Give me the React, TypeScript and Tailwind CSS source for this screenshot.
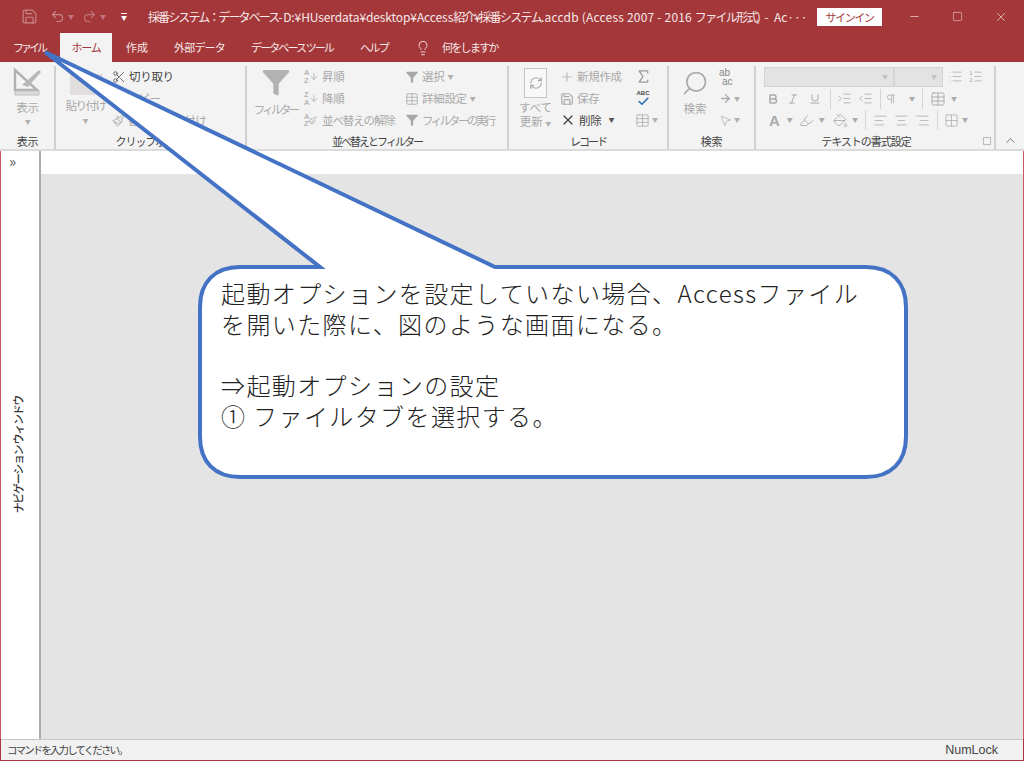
import React from "react";
import {
  Save, Undo2, Redo2, Scissors, Lightbulb, Minus, Square, X, Search, ArrowRight, MousePointer2,
  Bold, Italic, Underline, List, ListOrdered, AlignLeft, AlignCenter, AlignRight, IndentIncrease,
  IndentDecrease, Check, Table, Grid2x2, Sigma, X as Cross, ChevronUp, RefreshCw, Filter, Pilcrow,
  Paintbrush, PaintBucket, Highlighter, Plus, ArrowDown,
} from "lucide-react";

const FONT = "font-['Noto_Sans_CJK_JP','Noto_Sans',sans-serif]";
const GRAY = "text-[#a9a9a9]";

function Caret({ className = "text-[#b0b0b0]" }: { className?: string }) {
  return <span className={`inline-block text-[6px] leading-none ${className}`}>▼</span>;
}

// ribbon group: content on top, caption at the bottom, divider on the right
function Group({ width, label, labelClass, children }: { width: number; label: string; labelClass: string; children: React.ReactNode }) {
  return (
    <div className="relative flex flex-col h-full border-r-2 border-[#d0d0d0] shrink-0 mb-[2px]" style={{ width }}>
      <div className="flex-1 flex min-h-0">{children}</div>
      <div className={`h-[18px] text-center text-[11px] leading-[20px] text-[#444] whitespace-nowrap ${labelClass}`}>{label}</div>
    </div>
  );
}

function Row({ icon, text, dark, caret, track = "tracking-[-0.3px]" }: { icon: React.ReactNode; text: string; dark?: boolean; caret?: boolean; track?: string }) {
  return (
    <div className={`h-[22px] flex items-center gap-[3px] text-[11.5px] whitespace-nowrap ${track} ${dark ? "text-[#444]" : GRAY}`}>
      {icon}
      <span>{text}</span>
      {caret && <Caret className={dark ? "text-[#555] ml-1" : "text-[#b0b0b0]"} />}
    </div>
  );
}

function AzIcon({ top, bottom, pen }: { top: string; bottom: string; pen?: boolean }) {
  return (
    <span className="flex items-center w-[15px] shrink-0">
      <span className="flex flex-col text-[7.5px] leading-[7.5px] font-bold text-[#b5b5b5] font-['Liberation_Sans',sans-serif]">
        <span>{top}</span>
        <span>{bottom}</span>
      </span>
      {pen ? <Paintbrush size={9} className="text-[#b0b0b0]" /> : <ArrowDown size={11} strokeWidth={1.5} className="text-[#999]" />}
    </span>
  );
}

function TitleBar() {
  return (
    <div className="h-[33px] flex items-center text-white shrink-0">
      <div className="w-[148px] flex items-center shrink-0">
        <Save size={17} strokeWidth={1.6} className="ml-[21px] text-[#c98689]" />
        <Undo2 size={15} strokeWidth={1.8} className="ml-[12px] text-[#c98689]" />
        <Caret className="text-[#c0787b] ml-[3px]" />
        <Redo2 size={15} strokeWidth={1.8} className="ml-[8px] text-[#c0787b]" />
        <Caret className="text-[#c0787b] ml-[3px]" />
        <span className="ml-[15px] flex flex-col items-center gap-[1px]">
          <span className="w-[6px] h-[1px] bg-white" />
          <Caret className="text-white" />
        </span>
      </div>
      <div className="w-[669px] text-[12px] whitespace-pre text-[#f6e9e9]">
        <span className="tracking-[-1.9px]">採番システム：データベース-</span>
        <span className="tracking-[-0.1px]"> D:¥HUserdata¥desktop¥Access</span>
        <span className="tracking-[-1.6px]">紹介¥採番システム</span>
        <span className="tracking-[0.2px]">.accdb (Access 2007 - 2016 </span>
        <span className="tracking-[-1.7px]">ファイル形式)</span>
        <span>{"  -  Ac···"}</span>
      </div>
      <div className="w-[65px] h-[18px] bg-white text-[#a4373a] text-[11px] tracking-[-1.4px] leading-[18px] text-center shrink-0">サインイン</div>
      <div className="flex-1 flex items-center justify-end pr-[16px] gap-[31px] text-[#f3e3e3]">
        <Minus size={13} strokeWidth={1.2} />
        <Square size={11} strokeWidth={1.2} />
        <X size={14} strokeWidth={1.2} />
      </div>
    </div>
  );
}

function TabStrip() {
  return (
    <div className="h-[29px] flex items-stretch shrink-0 text-[11px] leading-[29px] whitespace-pre text-[#f6e9e9]">
      <div className="w-[60px] pl-[13px] tracking-[-3px]">ファイル</div>
      <div className="w-[52px] bg-[#f3f3f3] text-[#a4373a] text-center tracking-[-1.3px]">ホーム</div>
      <div className="w-[50px] text-center">作成</div>
      <div className="w-[75px] text-center tracking-[-0.8px]">外部データ</div>
      <div className="w-[110px] text-center tracking-[-1.9px]">データベース ツール</div>
      <div className="w-[54px] text-center tracking-[-1.7px]">ヘルプ</div>
      <div className="flex items-center">
        <Lightbulb size={16} strokeWidth={1.3} className="ml-[14px]" />
        <span className="ml-[11px] tracking-[-1.7px]">何をしますか</span>
      </div>
    </div>
  );
}

function Ribbon() {
  return (
    <div className="h-[89px] bg-[#f3f3f3] border-b-2 border-[#dcdcdc] flex pt-[4px] pl-[1px] shrink-0 text-[11.5px] relative">
      <Group width={55} label="表示" labelClass="tracking-[-0.3px]">
        <div className={`w-full flex flex-col items-center ${GRAY} tracking-[-0.3px]`}>
          <svg width="30" height="30" viewBox="0 0 30 30" className="mt-[1px]" fill="none">
            <path d="M2 3v20h22z" stroke="#b0b0b0" strokeWidth="2.4" />
            <path d="M9 18 26 3l2 2-13 15z" fill="#b8b8b8" />
            <path d="M2 24h24v4H2z" fill="#dcdcdc" stroke="#c0c0c0" />
          </svg>
          <span className="mt-[3px] leading-[15px]">表示</span>
          <Caret className="mt-[4px] text-[#b0b0b0]" />
        </div>
      </Group>
      <Group width={191} label="クリップボード" labelClass="tracking-[-1px]">
        <div className={`w-[56px] flex flex-col items-center pt-[8px] pl-[3px] ${GRAY}`}>
          <div className="w-[32px] h-[21px] bg-[#e2dede] border-r border-[#ccc]" />
          <span className="mt-[3px] tracking-[-1.6px] whitespace-nowrap leading-[15px]">貼り付け</span>
          <Caret className="mt-[5px] text-[#b0b0b0]" />
        </div>
        <div className="flex flex-col">
          <Row dark text="切り取り" icon={<Scissors size={14} strokeWidth={1.5} className="text-[#555]" />} />
          <Row text="コピー" icon={<Square size={12} className="text-[#bbb]" />} />
          <Row text="書式の貼り付け" icon={<Paintbrush size={13} className="text-[#bbb]" />} />
        </div>
      </Group>
      <Group width={262} label="並べ替えとフィルター" labelClass="tracking-[-2px]">
        <div className={`w-[57px] flex flex-col items-center ${GRAY} tracking-[-2.8px]`}>
          <Filter size={32} strokeWidth={0} fill="#b2b2b2" />
          <span className="mt-[4px] leading-[15px] whitespace-nowrap">フィルター</span>
        </div>
        <div className="w-[101px] flex flex-col">
          <Row text="昇順" icon={<AzIcon top="A" bottom="Z" />} />
          <Row text="降順" icon={<AzIcon top="Z" bottom="A" />} />
          <Row text="並べ替えの解除" track="tracking-[-1.1px]" icon={<AzIcon top="A" bottom="Z" pen />} />
        </div>
        <div className="flex flex-col">
          <Row caret text="選択" icon={<Filter size={14} strokeWidth={0} fill="#a8a8a8" />} />
          <Row caret text="詳細設定" icon={<Table size={14} strokeWidth={1.4} className="text-[#aaa]" />} />
          <Row text="フィルターの実行" track="tracking-[-2.5px]" icon={<Filter size={14} strokeWidth={0} fill="#a8a8a8" />} />
        </div>
      </Group>
      <Group width={160} label="レコード" labelClass="tracking-[-2px]">
        <div className={`w-[51px] flex flex-col items-center ${GRAY} pt-[2px] pl-[2px]`}>
          <div className="w-[23px] h-[30px] border border-[#c4c4c4] bg-[#f8f8f8] flex items-center justify-center">
            <RefreshCw size={14} strokeWidth={2} className="text-[#aaa]" />
          </div>
          <span className="mt-[2px] leading-[14px]">すべて</span>
          <span className="leading-[14px] whitespace-nowrap">更新 <Caret /></span>
        </div>
        <div className="w-[73px] flex flex-col">
          <Row text="新規作成" icon={<Plus size={14} className="text-[#bbb]" />} />
          <Row text="保存" icon={<Save size={14} className="text-[#aaa]" />} />
          <Row dark caret text="削除" icon={<Cross size={16} strokeWidth={1.8} className="text-[#444]" />} />
        </div>
        <div className="flex flex-col pl-[2px]">
          <div className="h-[22px] flex items-center"><Sigma size={17} strokeWidth={1.8} className="text-[#999]" /></div>
          <div className="h-[22px] flex flex-col items-center justify-center w-[16px]">
            <span className="text-[6px] leading-[6px] font-bold text-[#444] font-['Liberation_Sans',sans-serif]">ABC</span>
            <Check size={13} strokeWidth={3} className="text-[#2b6cb8] -mt-[1px]" />
          </div>
          <div className="h-[22px] flex items-center gap-[2px]"><Table size={15} strokeWidth={1.3} className="text-[#aaa]" /><Caret /></div>
        </div>
      </Group>
      <Group width={87} label="検索" labelClass="tracking-[-0.3px]">
        <div className={`w-[50px] flex flex-col items-center pl-[2px] ${GRAY}`}>
          <Search size={28} strokeWidth={1.5} className="text-[#aaa] -scale-x-100 mt-[3px]" />
          <span className="mt-[4px] leading-[15px]">検索</span>
        </div>
        <div className="flex flex-col">
          <div className="h-[22px] text-[10px] leading-[9px] text-[#888] font-['Liberation_Sans',sans-serif] pt-[2px]">
            <div>ab</div>
            <div className="pl-[3px]">ac</div>
          </div>
          <div className="h-[22px] flex items-center gap-[2px]"><ArrowRight size={13} strokeWidth={2.4} className="text-[#aaa]" /><Caret /></div>
          <div className="h-[22px] flex items-center gap-[2px]"><MousePointer2 size={13} strokeWidth={1.4} className="text-[#aaa]" /><Caret /></div>
        </div>
      </Group>
      <Group width={240} label="テキストの書式設定" labelClass="tracking-[-1px] pr-[18px]">
        <div className="flex-1 flex flex-col pl-[8px]">
          <div className="flex items-center h-[22px]">
            <div className="w-[130px] h-[20px] bg-[#e3e3e3] border border-[#d4d4d4] flex items-center justify-end pr-[5px]"><Caret className="text-[#c2c2c2]" /></div>
            <div className="w-[49px] h-[20px] bg-[#e3e3e3] border border-[#d4d4d4] flex items-center justify-end pr-[5px]"><Caret className="text-[#c2c2c2]" /></div>
            <List size={15} strokeWidth={1.2} className="ml-[5px] text-[#aaa]" />
            <ListOrdered size={15} strokeWidth={1.2} className="ml-[5px] text-[#aaa]" />
          </div>
          <div className="flex items-center h-[22px] text-[#aaa] pl-[3px]">
            <Bold size={12} strokeWidth={3} />
            <Italic size={12} strokeWidth={2} className="ml-[8px]" />
            <Underline size={12} strokeWidth={2} className="ml-[10px]" />
            <span className="w-[1px] h-[20px] bg-[#d4d4d4] ml-[9px]" />
            <IndentIncrease size={15} strokeWidth={1.3} className="ml-[6px]" />
            <IndentDecrease size={15} strokeWidth={1.3} className="ml-[6px]" />
            <span className="w-[1px] h-[20px] bg-[#d4d4d4] ml-[7px]" />
            <Pilcrow size={12} strokeWidth={1.5} className="ml-[4px]" />
            <Caret className="ml-[12px]" />
            <span className="w-[1px] h-[20px] bg-[#d4d4d4] ml-[7px]" />
            <Table size={16} strokeWidth={1.4} className="ml-[7px]" />
            <Caret className="ml-[5px]" />
          </div>
          <div className="flex items-center h-[22px] text-[#aaa] pl-[5px]">
            <span className="text-[15px] font-bold leading-none font-['Liberation_Sans',sans-serif]">A</span>
            <Caret className="ml-[7px]" />
            <Highlighter size={15} strokeWidth={1.4} className="ml-[6px]" />
            <Caret className="ml-[5px]" />
            <PaintBucket size={15} strokeWidth={1.4} className="ml-[8px]" />
            <Caret className="ml-[4px]" />
            <span className="w-[1px] h-[20px] bg-[#d4d4d4] ml-[7px]" />
            <AlignLeft size={15} strokeWidth={1.2} className="ml-[7px]" />
            <AlignCenter size={15} strokeWidth={1.2} className="ml-[6px]" />
            <AlignRight size={15} strokeWidth={1.2} className="ml-[6px]" />
            <span className="w-[1px] h-[20px] bg-[#d4d4d4] ml-[7px]" />
            <Grid2x2 size={15} strokeWidth={1.2} className="ml-[6px]" />
            <Caret className="ml-[3px]" />
          </div>
        </div>
        <span className="absolute right-[3px] bottom-[4px] w-[8px] h-[8px] border border-[#bbb]" />
      </Group>
      <div className="flex-1 flex items-end justify-center pb-[1px]">
        <ChevronUp size={15} strokeWidth={1.2} className="text-[#555]" />
      </div>
    </div>
  );
}

export default function App() {
  return (
    <div className={`relative w-[1024px] h-[761px] overflow-hidden flex flex-col bg-[#a4373a] ${FONT}`}>
      <TitleBar />
      <TabStrip />
      <Ribbon />
      <div className="flex-1 flex min-h-0 border-l border-[#c8595c] border-r">
        <div className="w-[40px] bg-white border-r-2 border-[#a9acb4] flex flex-col shrink-0">
          <div className="h-[23px] pl-[8px] text-[15px] leading-[20px] text-[#555]">»</div>
          <div className="flex-1 flex items-center justify-center pb-[4px] pr-[3px]">
            <span className="[writing-mode:vertical-rl] [text-orientation:sideways] rotate-180 text-[11px] font-medium tracking-[-1.3px] text-[#333] whitespace-pre">
              ナビゲーション ウィンドウ
            </span>
          </div>
        </div>
        <div className="flex-1 flex flex-col">
          <div className="h-[23px] bg-white shrink-0" />
          <div className="flex-1 bg-[#e4e4e4]" />
        </div>
      </div>
      <div className="h-[21px] ml-[1px] mr-[1px] mb-[1px] bg-[#f1f1f1] border-t border-[#c6c6c6] flex items-center justify-between pl-[6px] pr-[25px] text-[10.5px] text-[#444] shrink-0">
        <span className="tracking-[-1.9px]">コマンドを入力してください。</span>
        <span className="font-['Liberation_Sans',sans-serif] text-[12.5px]">NumLock</span>
      </div>

      {/* callout over the window */}
      <svg className="absolute left-0 top-0 pointer-events-none" width="1024" height="761" viewBox="0 0 1024 761" fill="none">
        <path
          d="M45 52 L320 267 H240 C215 267 200 282 200 307 V437 C200 462 215 477 240 477 H866 C891 477 906 462 906 437 V307 C906 282 891 267 866 267 H495 Z"
          fill="#fff"
          stroke="#4472c4"
          strokeWidth="4"
          strokeLinejoin="miter"
        />
      </svg>
      <div className="absolute left-[221px] top-[278px] w-[670px] text-[24px] leading-[30.7px] tracking-[1.4px] font-light text-[#222] whitespace-pre">
        {"起動オプションを設定していない場合、Accessファイル\nを開いた際に、図のような画面になる。\n\n⇒起動オプションの設定\n① ファイルタブを選択する。"}
      </div>
    </div>
  );
}
